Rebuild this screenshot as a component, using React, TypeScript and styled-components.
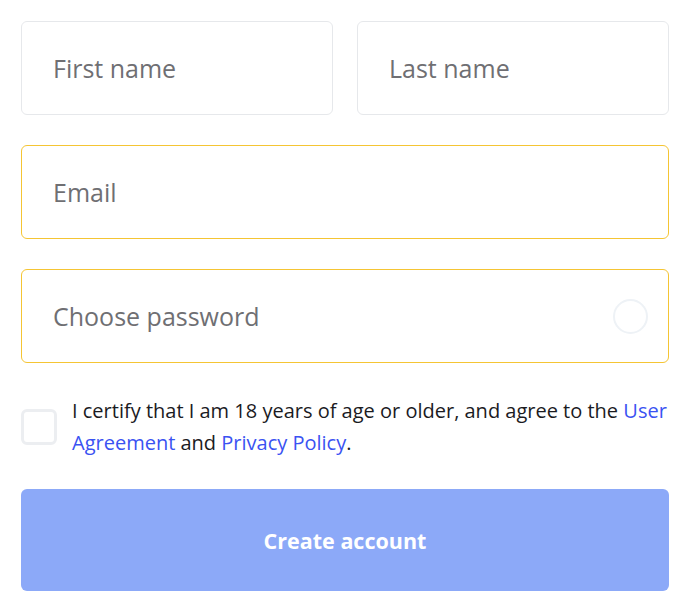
import React from "react";
import styled, { createGlobalStyle } from "styled-components";

const Global = createGlobalStyle`
  body { margin: 0; background: #ffffff; font-family: "Open Sans", "Noto Sans", sans-serif; }
  * { box-sizing: border-box; }
`;

const Form = styled.form`
  display: flex;
  flex-direction: column;
  gap: 30px;
  padding: 21px 25px 16px 21px;
  width: 694px;
`;

const Row = styled.div`
  display: grid;
  grid-template-columns: minmax(0, 1fr) minmax(0, 1fr);
  gap: 24px;
`;

const Field = styled.div<{ $accent?: boolean }>`
  height: 94px;
  border: 1px solid ${(p) => (p.$accent ? "#f5c534" : "#e6e8eb")};
  border-radius: 6px;
  display: flex;
  align-items: center;
  padding: 0 20px 0 31px;
  min-width: 0;
`;

const Input = styled.input`
  flex: 1;
  min-width: 0;
  width: 100%;
  border: none;
  outline: none;
  background: transparent;
  font-family: "Open Sans", "Noto Sans", sans-serif;
  font-size: 25px;
  color: #333;
  padding: 0;
  &::placeholder { color: #6f6f73; }
`;

const Spinner = styled.span`
  width: 35px;
  height: 35px;
  border-radius: 50%;
  border: 2px solid #eef2f6;
  flex: none;
`;

const Consent = styled.label`
  display: flex;
  align-items: center;
  gap: 15px;
  margin-top: 2px;
`;

const Box = styled.span`
  width: 36px;
  height: 36px;
  flex: none;
  border: 3px solid #eceef1;
  border-radius: 6px;
`;

const ConsentText = styled.span`
  font-size: 20px;
  line-height: 32px;
  color: #1b1b1f;
`;

const Link = styled.a`
  color: #3a52f2;
  text-decoration: none;
`;

const Submit = styled.button`
  height: 102px;
  border: none;
  border-radius: 6px;
  background: #8ca9f8;
  color: #ffffff;
  font-family: "Open Sans", "Noto Sans", sans-serif;
  font-size: 21.5px;
  font-weight: 700;
`;

export default function App() {
  return (
    <>
      <Global />
      <Form onSubmit={(e) => e.preventDefault()}>
        <Row>
          <Field>
            <Input placeholder="First name" />
          </Field>
          <Field>
            <Input placeholder="Last name" />
          </Field>
        </Row>
        <Field $accent>
          <Input placeholder="Email" />
        </Field>
        <Field $accent>
          <Input type="password" placeholder="Choose password" />
          <Spinner />
        </Field>
        <Consent>
          <Box />
          <ConsentText>
            I certify that I am 18 years of age or older, and agree to the{" "}
            <Link href="#">User Agreement</Link> and <Link href="#">Privacy Policy</Link>.
          </ConsentText>
        </Consent>
        <Submit type="submit">Create account</Submit>
      </Form>
    </>
  );
}
